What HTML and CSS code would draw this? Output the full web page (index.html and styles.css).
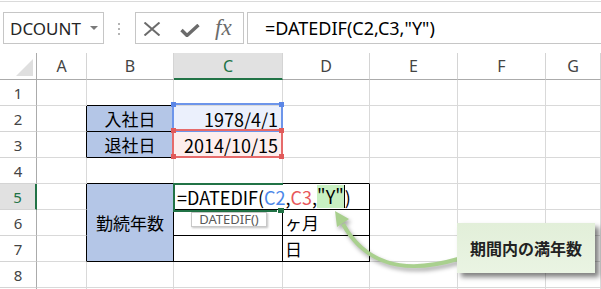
FILE: index.html
```html
<!DOCTYPE html>
<html lang="ja">
<head>
    <meta charset="UTF-8">
    <title>DATEDIF</title>
    <link rel="stylesheet" href="styles.css">
</head>
<body>

<div class="app">
    <!-- Formula bar -->
    <div class="formula-bar">
        <div class="name-box"><span>DCOUNT</span><span class="caret"></span></div>
        <div class="grip"><span></span></div>
        <div class="fx-buttons">
            <svg class="ico-cancel" width="18" height="14" viewBox="0 0 18 14">
                <path d="M1.5 0.5 L16.5 13.5 M16.5 0.5 L1.5 13.5" stroke="#6b6b6b" stroke-width="2" fill="none"/>
            </svg>
            <svg class="ico-enter" width="20" height="13" viewBox="0 0 20 13">
                <path d="M1.5 6 L7 11.5 L18.5 1" stroke="#6b6b6b" stroke-width="3.4" fill="none"/>
            </svg>
            <span class="fx">fx</span>
        </div>
        <div class="formula-input">=DATEDIF(C2,C3,"Y")</div>
    </div>

    <!-- Sheet -->
    <div class="sheet">
        <div class="grid">
            <div class="corner"><span class="tri"></span></div>
            <div class="ch">A</div>
            <div class="ch">B</div>
            <div class="ch sel">C</div>
            <div class="ch">D</div>
            <div class="ch">E</div>
            <div class="ch">F</div>
            <div class="ch">G</div>

            <div class="rh">1</div>
            <div class="c"></div><div class="c bk-b"></div><div class="c"></div><div class="c"></div><div class="c"></div><div class="c"></div><div class="c"></div>

            <div class="rh">2</div>
            <div class="c bk-r"></div>
            <div class="c label bk-r bk-b">入社日</div>
            <div class="c val ref-blue-fill">1978/4/1</div>
            <div class="c"></div><div class="c"></div><div class="c"></div><div class="c"></div>

            <div class="rh">3</div>
            <div class="c bk-r"></div>
            <div class="c label bk-r bk-b">退社日</div>
            <div class="c val ref-red-fill">2014/10/15</div>
            <div class="c"></div><div class="c"></div><div class="c"></div><div class="c"></div>

            <div class="rh">4</div>
            <div class="c"></div><div class="c bk-b"></div><div class="c bk-b"></div><div class="c bk-b"></div><div class="c"></div><div class="c"></div><div class="c"></div>

            <div class="rh sel">5</div>
            <div class="c bk-r"></div>
            <div class="c label merged bk-r bk-b">勤続年数</div>
            <div class="c edit bk-b">=DATEDIF(<span class="r-blue">C2</span>,<span class="r-red">C3</span>,<span class="hl">"Y"</span>)</div>
            <div class="c bk-r bk-b"></div>
            <div class="c"></div><div class="c"></div><div class="c"></div>

            <div class="rh">6</div>
            <div class="c bk-r"></div>
            <div class="c bk-r bk-b"></div>
            <div class="c txt bk-r bk-b">ヶ月</div>
            <div class="c"></div><div class="c"></div><div class="c"></div>

            <div class="rh">7</div>
            <div class="c bk-r"></div>
            <div class="c bk-r bk-b"></div>
            <div class="c txt bk-r bk-b">日</div>
            <div class="c"></div><div class="c"></div><div class="c"></div>

            <div class="rh">8</div>
            <div class="c"></div><div class="c"></div><div class="c"></div><div class="c"></div><div class="c"></div><div class="c"></div><div class="c"></div>

            <div class="rh"></div>
            <div class="c"></div><div class="c"></div><div class="c"></div><div class="c"></div><div class="c"></div><div class="c"></div><div class="c"></div>
        </div>
    </div>

    <!-- Range references and the active cell -->
    <div class="ref-box ref-blue">
        <span class="handle tl"></span><span class="handle tr"></span>
    </div>
    <div class="ref-box ref-red">
        <span class="handle tl"></span><span class="handle tr"></span>
        <span class="handle bl"></span><span class="handle br"></span>
    </div>
    <div class="active-cell"></div>
    <div class="fill-handle"></div>

    <div class="tip">DATEDIF()</div>

    <!-- Callout -->
    <svg class="arrow" width="601" height="289" viewBox="0 0 601 289">
        <g class="arrow-shape">
            <path d="M458 259 C400 276 364 262 343 224" stroke="#a9d08e" stroke-width="4" fill="none"/>
            <polygon points="335,211 349,219 337,227" fill="#a9d08e"/>
        </g>
    </svg>
    <div class="callout">期間内の満年数</div>
</div>

</body>
</html>
```

FILE: styles.css
```css
* {
    box-sizing: border-box;
}
body {
    margin: 0;
    background: #fff;
    font-family: "Noto Sans", "Noto Sans CJK JP", sans-serif;
    overflow: hidden;
}
.app {
    position: relative;
    width: 601px;
    height: 289px;
    overflow: hidden;
}

/* formula bar */
.formula-bar {
    display: flex;
    align-items: flex-start;
    margin-top: 1px;
    height: 52px;
    border-top: 1px solid #dadada;
    padding: 10px 0 0 3px;
}
.formula-bar > div {
    flex: none;
}
.name-box {
    width: 101px;
    height: 32px;
    border: 1px solid #c6c6c6;
    display: flex;
    align-items: center;
    padding-left: 6px;
    font-size: 17px;
    color: #262626;
}
.caret {
    margin-left: auto;
    margin-right: 5px;
    width: 0;
    height: 0;
    border-left: 4px solid transparent;
    border-right: 4px solid transparent;
    border-top: 4px solid #7a7a7a;
}
.grip {
    width: 31px;
    height: 32px;
    padding: 11px 0 0 14px;
}
.grip span {
    display: block;
    width: 2px;
    height: 12px;
    background: repeating-linear-gradient(#b4b4b4 0 2px, transparent 2px 5px);
}
.fx-buttons {
    width: 109px;
    height: 32px;
    border: 1px solid #c6c6c6;
    display: flex;
    align-items: center;
    padding-left: 7px;
}
.ico-cancel {
    margin-top: 1px;
}
.ico-enter {
    margin-left: 19px;
    margin-top: 5px;
}
.fx {
    margin-left: 15px;
    font-family: "Liberation Serif", serif;
    font-style: italic;
    font-size: 23px;
    color: #6b6b6b;
    line-height: 1;
    margin-top: -2px;
}
.formula-input {
    width: 400px;
    height: 32px;
    margin-left: 3px;
    border: 1px solid #c6c6c6;
    padding-left: 17px;
    display: flex;
    align-items: center;
    font-size: 18px;
    color: #000;
}

/* sheet grid */
.grid {
    display: grid;
    grid-template-columns: 37px 50px 87px 109px 87px 88px 88px 1fr;
    grid-template-rows: 27px repeat(9, 26px);
    font-family: "Noto Sans CJK JP", sans-serif;
    font-size: 18px;
}
.corner, .ch, .rh {
    color: #444;
    font-family: "Noto Sans", sans-serif;
    font-size: 16px;
    display: flex;
    align-items: center;
    justify-content: center;
}
.rh {
    font-size: 15px;
}
.corner {
    position: relative;
    border-right: 1px solid #ababab;
    border-bottom: 1px solid #ababab;
}
.tri {
    position: absolute;
    right: 3px;
    bottom: 3px;
    width: 0;
    height: 0;
    border-left: 17px solid transparent;
    border-bottom: 17px solid #dfdfdf;
}
.ch {
    border-right: 1px solid #d4d4d4;
    border-bottom: 1px solid #ababab;
}
.ch.sel {
    background: #e1e1e1;
    color: #217346;
    border-bottom: 2px solid #217346;
}
.rh {
    border-right: 1px solid #ababab;
    border-bottom: 1px solid #d4d4d4;
}
.rh.sel {
    background: #e1e1e1;
    color: #217346;
    border-right: 2px solid #217346;
}
.c {
    border-right: 1px solid #d9d9d9;
    border-bottom: 1px solid #d9d9d9;
    display: flex;
    align-items: center;
    white-space: nowrap;
    color: #000;
}
.bk-r {
    border-right-color: #000;
}
.bk-b {
    border-bottom-color: #000;
}
.label {
    background: #b4c6e7;
    justify-content: center;
    font-size: 17px;
}
.merged {
    grid-row: span 3;
}
.val {
    justify-content: flex-end;
    padding-right: 4px;
}
.ref-blue-fill {
    background: #ebf0fc;
}
.ref-red-fill {
    background: #fdeeed;
}
.txt {
    padding-left: 2px;
    font-size: 17px;
}
.edit {
    padding-left: 3px;
    border-right-color: transparent;
    overflow: visible;
    position: relative;
    z-index: 1;
}
.r-blue {
    color: #4a86e8;
}
.r-red {
    color: #e8575a;
}
.hl {
    display: inline-block;
    background: #c8f0c2;
    border-right: 1px solid #000;
    line-height: 23px;
}

/* overlays */
.ref-box {
    position: absolute;
    left: 172px;
    width: 111px;
    height: 29px;
    border: 2px solid;
}
.ref-blue {
    top: 103px;
    border-color: #6d95ea;
}
.ref-red {
    top: 129px;
    border-color: #e66b6b;
}
.handle {
    position: absolute;
    width: 5px;
    height: 5px;
}
.ref-blue .handle {
    background: #5b86e6;
}
.ref-red .handle {
    background: #e05a5a;
}
.tl { left: -3px; top: -3px; }
.tr { right: -3px; top: -3px; }
.bl { left: -3px; bottom: -3px; }
.br { right: -3px; bottom: -3px; }

.active-cell {
    position: absolute;
    left: 173px;
    top: 183px;
    width: 110px;
    height: 27px;
    border-top: 2px solid #217346;
    border-left: 2px solid #217346;
    z-index: 2;
}
.active-cell::after {
    content: "";
    position: absolute;
    left: -2px;
    bottom: -2px;
    width: 104px;
    height: 2px;
    background: #217346;
}
.fill-handle {
    position: absolute;
    left: 278px;
    top: 208px;
    width: 6px;
    height: 5px;
    background: #217346;
    z-index: 2;
}
.tip {
    position: absolute;
    left: 191px;
    top: 212px;
    width: 76px;
    height: 15px;
    border: 1px solid #c8c8c8;
    background: #fff;
    box-shadow: 1px 1px 2px rgba(0, 0, 0, 0.25);
    font-family: "Noto Sans", sans-serif;
    font-size: 13px;
    line-height: 13px;
    color: #595959;
    text-align: center;
    z-index: 3;
}
.arrow {
    position: absolute;
    left: 0;
    top: 0;
    z-index: 3;
}
.arrow-shape {
    filter: drop-shadow(2px 3px 2px rgba(0, 0, 0, 0.35));
}
.callout {
    position: absolute;
    left: 457px;
    top: 223px;
    width: 138px;
    height: 50px;
    display: flex;
    align-items: center;
    justify-content: center;
    background: linear-gradient(#e2efd9, #eaf4e3);
    box-shadow: 4px 4px 5px rgba(0, 0, 0, 0.5);
    font-family: "Noto Sans CJK JP", sans-serif;
    font-weight: bold;
    font-size: 16px;
    color: #222;
    z-index: 4;
}
```
